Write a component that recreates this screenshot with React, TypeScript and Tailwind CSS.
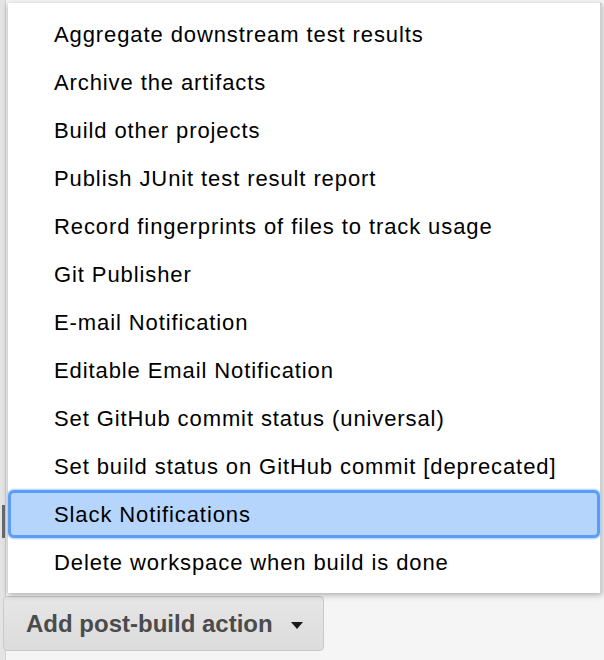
import React from "react";

const ITEMS = [
  "Aggregate downstream test results",
  "Archive the artifacts",
  "Build other projects",
  "Publish JUnit test result report",
  "Record fingerprints of files to track usage",
  "Git Publisher",
  "E-mail Notification",
  "Editable Email Notification",
  "Set GitHub commit status (universal)",
  "Set build status on GitHub commit [deprecated]",
  "Slack Notifications",
  "Delete workspace when build is done",
];

const SELECTED = "Slack Notifications";

export default function App() {
  return (
    <div className="relative w-[604px] h-[660px] overflow-hidden bg-[#f5f5f5] font-['Liberation_Sans',Arial,sans-serif]">
      {/* page behind the popup */}
      <div className="flex h-full">
        <div className="w-[6px] h-full bg-[#e4e4e4] border-r border-[#d2d2d2] flex flex-col">
          <div className="mt-[505px] ml-[2px] w-[3px] h-[33px] bg-[#6b6b6b]" />
        </div>
        <div className="flex-1 flex flex-col justify-end pb-[9px] -ml-[3px]">
          <button className="flex items-center w-[321px] h-[55px] pl-[22px] rounded-[4px] border border-[#c9c9c9] bg-gradient-to-b from-[#e6e6e6] to-[#dcdcdc] text-[#4b4b4b] text-[24px] font-bold">
            Add post-build action
            <svg width="12" height="7" viewBox="0 0 12 7" className="ml-[18px] mt-[3px]">
              <path d="M0 0 H12 L6 7 Z" fill="#1a1a1a" />
            </svg>
          </button>
        </div>
      </div>

      {/* dropdown menu */}
      <div className="absolute left-[8px] top-[3px] w-[594px] py-[7px] bg-white border-r-2 border-[#cfcfcf] shadow-[0_2px_6px_rgba(0,0,0,0.3)]">
        {ITEMS.map((item) =>
          item === SELECTED ? (
            <div
              key={item}
              className="flex items-center h-[48px] pl-[43px] rounded-[6px] border-[3px] border-[#5a9df3] bg-[#b5d5fd] shadow-[0_0_2px_1px_#a9cdfa] text-[22px] tracking-[0.9px] text-black"
            >
              {item}
            </div>
          ) : (
            <div key={item} className="flex items-center h-[48px] pl-[46px] text-[22px] tracking-[0.9px] text-black">
              {item}
            </div>
          )
        )}
      </div>
    </div>
  );
}
